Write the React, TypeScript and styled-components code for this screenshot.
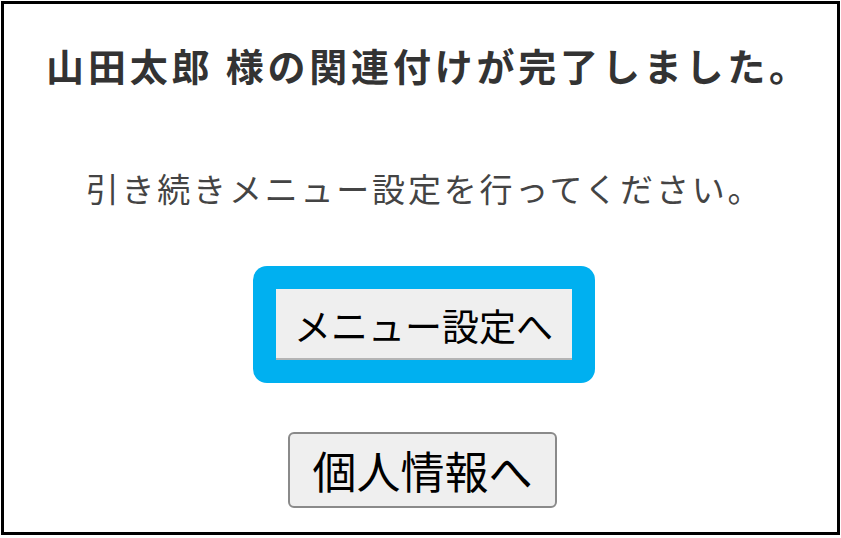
import React from "react";
import styled, { createGlobalStyle } from "styled-components";

const Global = createGlobalStyle`
  html, body { margin: 0; padding: 0; background: #fff; }
  body { font-family: "Noto Sans CJK JP", "Noto Sans", sans-serif; }
`;

const Frame = styled.div`
  box-sizing: border-box;
  width: 839px;
  height: 534px;
  margin: 1px 0 0 1px;
  border: 3px solid #000;
  display: flex;
  flex-direction: column;
  align-items: center;
  padding-top: 38px;
`;

const Heading = styled.h1`
  margin: 0 0 0 16px;
  font-size: 38px;
  line-height: 46px;
  font-weight: 700;
  color: #333;
  letter-spacing: 3.8px;
  white-space: nowrap;
`;

const Message = styled.p`
  margin: 80px 0 0 8px;
  font-size: 33px;
  line-height: 40px;
  font-weight: 400;
  color: #444;
  letter-spacing: 2.8px;
  white-space: nowrap;
`;

const Highlight = styled.div`
  margin: 58px 0 0 6px;
  padding: 23px;
  background: #00b0f0;
  border-radius: 14px;
  display: flex;
`;

const Button = styled.button<{ $outlined?: boolean }>`
  box-sizing: border-box;
  font-family: "Noto Sans CJK JP", "Noto Sans", sans-serif;
  color: #000;
  background: #efefef;
  cursor: pointer;
  display: flex;
  align-items: center;
  justify-content: center;
  padding: 0;
  ${(p) =>
    p.$outlined
      ? `
    width: 269px;
    height: 76px;
    margin: 49px 0 0 4px;
    border: 2px solid #8a8a8a;
    border-radius: 6px;
    font-size: 44px;
  `
      : `
    width: 296px;
    height: 71px;
    border: none;
    border-radius: 0;
    box-shadow: inset 0 -2px 0 #b4b4b4;
    font-size: 37px;
  `}
`;

export default function App() {
  return (
    <>
      <Global />
      <Frame>
        <Heading>山田太郎 様の関連付けが完了しました。</Heading>
        <Message>引き続きメニュー設定を行ってください。</Message>
        <Highlight>
          <Button>メニュー設定へ</Button>
        </Highlight>
        <Button $outlined>個人情報へ</Button>
      </Frame>
    </>
  );
}
